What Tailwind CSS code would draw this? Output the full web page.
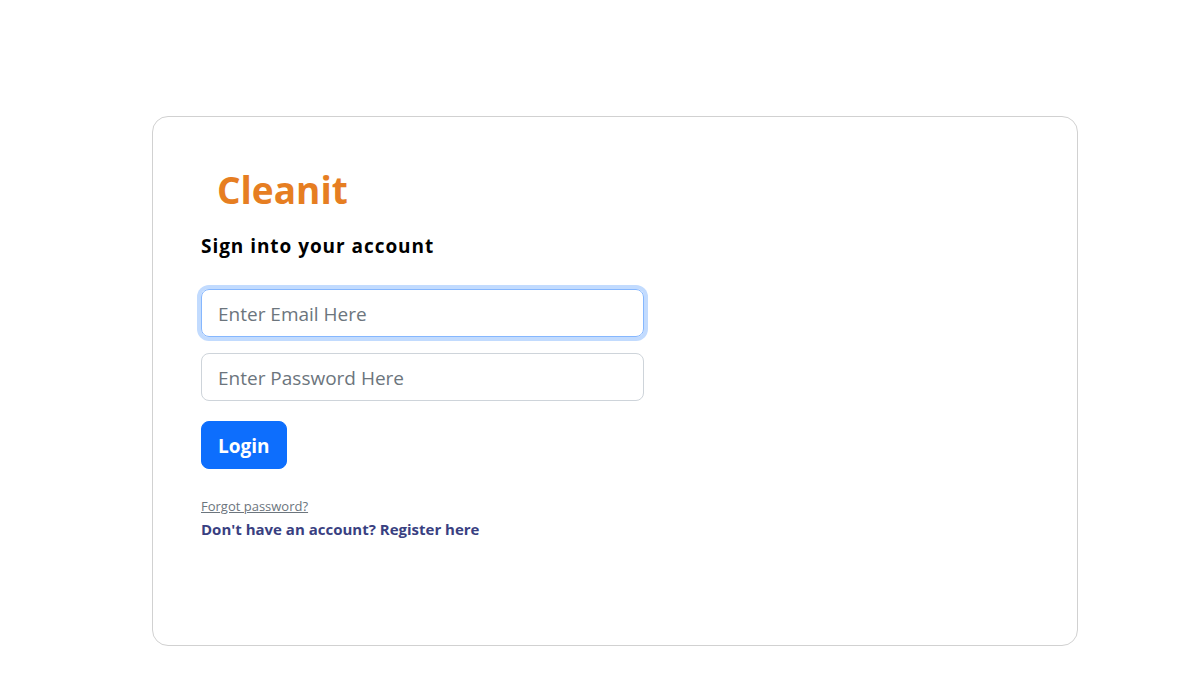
<!DOCTYPE html>
<html lang="en">
<head>
<meta charset="utf-8">
<meta name="viewport" content="width=device-width, initial-scale=1">
<title>Cleanit - Login</title>
<script src="https://cdn.jsdelivr.net/npm/@tailwindcss/browser@4"></script>
</head>
<body class="bg-white font-['Segoe_UI','Open_Sans','Noto_Sans',sans-serif] text-black">
<main class="pt-[116px] pr-[126px] pb-10 pl-[152px]">
  <section class="rounded-2xl border border-[#d1d1d1] px-12 pt-12 pb-[103px]">
    <h1 class="px-4 text-[37px] leading-[50px] font-bold text-[#e67e22]">Cleanit</h1>
    <form class="flex max-w-[443px] flex-col items-start">
      <h2 class="mt-[18px] text-[19px] leading-[26px] font-bold tracking-wider">Sign into your account</h2>
      <input id="email" type="email" aria-label="Email" placeholder="Enter Email Here" class="mt-[30px] h-12 w-full rounded-lg border border-[#86b7fe] px-4 pt-0.5 text-[19px] ring-4 ring-[#c2dbfe] outline-none placeholder:text-[#6c757d]">
      <input id="password" type="password" aria-label="Password" placeholder="Enter Password Here" class="mt-4 h-12 w-full rounded-lg border border-[#ced4da] px-4 pt-0.5 text-[19px] outline-none placeholder:text-[#6c757d]">
      <button type="submit" class="mt-5 h-12 rounded-lg border border-[#0d6efd] bg-[#0d6efd] px-4 pt-0.5 text-[19px] font-bold text-white">Login</button>
      <a href="#" class="mt-[27px] text-[13px] leading-5 text-[#6c757d] underline">Forgot password?</a>
      <p class="text-[15px] leading-[26px] font-bold text-[#393f81]">Don't have an account? <a href="#" class="text-[#393f81]">Register here</a></p>
    </form>
  </section>
</main>
</body>
</html>
